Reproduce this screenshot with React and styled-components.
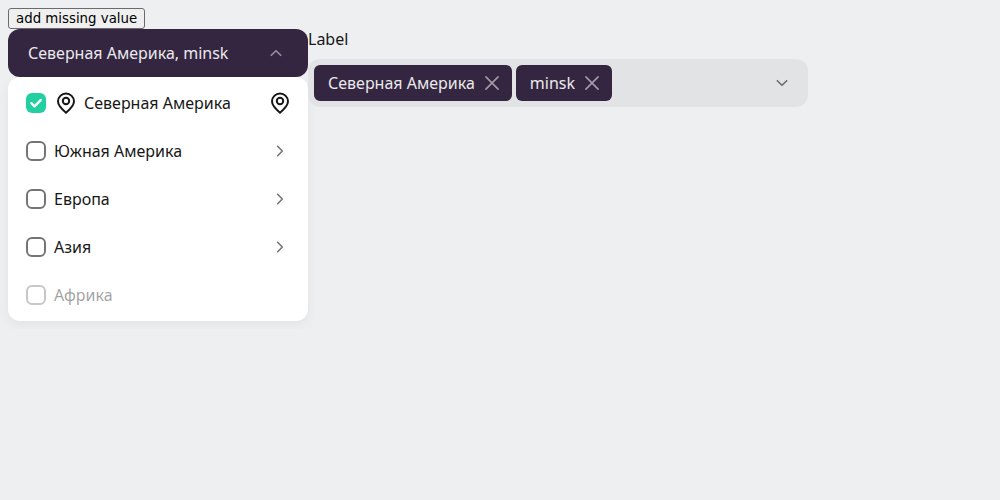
import React, { useState } from "react";
import styled, { createGlobalStyle, css } from "styled-components";

const Global = createGlobalStyle`
  *, *::before, *::after { box-sizing: border-box; }
  body {
    margin: 0;
    padding: 8px;
    background: #eeeff1;
    color: #171717;
    font: 16px/20px "Noto Sans", "Open Sans", sans-serif;
  }
`;

const PlainButton = styled.button`
  display: block;
  height: 21px;
  padding: 0 7px;
  border: 1px solid #6b6b6b;
  border-radius: 3px;
  background: #efefef;
  color: #000;
  font-family: "DejaVu Sans", sans-serif;
  line-height: 19px;
`;

const Columns = styled.main`
  display: flex;
  align-items: flex-start;
`;

const Dropdown = styled.section`
  flex: 0 1 300px;
`;

const Trigger = styled.button`
  display: flex;
  align-items: center;
  justify-content: space-between;
  width: 100%;
  height: 48px;
  padding: 0 20px;
  border: 0;
  border-radius: 12px;
  background: #342640;
  color: #ebe9ec;
  font: inherit;
`;

const Menu = styled.ul`
  margin: 0;
  padding: 2px 0;
  list-style: none;
  border-radius: 12px;
  background: #fff;
  box-shadow: 0 4px 12px rgba(8, 8, 8, 0.05);
`;

const Option = styled.li`
  display: flex;
  align-items: center;
  gap: 8px;
  height: 48px;
  padding: 0 16px 0 18px;
  ${(p) => p.$disabled && css`opacity: 0.4;`}
`;

const OptionLabel = styled.label`
  display: flex;
  flex: 1;
  align-items: center;
  gap: 6px;
`;

const Check = styled.input`
  appearance: none;
  flex: none;
  width: 20px;
  height: 20px;
  margin: 0;
  border: 2px solid #747474;
  border-radius: 6px;
  background: #fff;
  &:checked {
    border: 0;
    background: #21cfa0 url("data:image/svg+xml,%3Csvg xmlns='http://www.w3.org/2000/svg' width='20' height='20' fill='none' stroke='white' stroke-width='2.400' stroke-linecap='round' stroke-linejoin='round'%3E%3Cpath d='M5.400 10.200l3.100 3.100 6.200-6.200'/%3E%3C/svg%3E");
  }
`;

const Icon = styled.svg`
  flex: none;
  display: block;
  fill: none;
  stroke: currentColor;
  stroke-linecap: round;
  stroke-linejoin: round;
  color: ${(p) => p.$color || "#171717"};
`;

const Field = styled.section`
  flex: 0 1 500px;
  min-width: 0;
`;

const FieldLabel = styled.label`
  display: block;
  height: 30px;
`;

const Box = styled.div`
  display: flex;
  align-items: center;
  gap: 4px;
  height: 48px;
  padding: 0 14px 0 6px;
  border-radius: 12px;
  background: #e2e3e5;
`;

const Chip = styled.span`
  display: flex;
  align-items: center;
  gap: 5px;
  height: 36px;
  padding: 0 8px 0 14px;
  border-radius: 6px;
  background: #342640;
  color: #ebe9ec;
  white-space: nowrap;
`;

const IconButton = styled.button`
  flex: none;
  padding: 0;
  border: 0;
  background: none;
`;

const Entry = styled.input`
  flex: 1;
  width: 0;
  min-width: 0;
  padding: 0;
  border: 0;
  outline: 0;
  background: none;
  font: inherit;
`;

const chevrons = {
  up: "M7.3 14.300l4.700-4.600 4.700 4.600",
  down: "M7.3 9.700l4.700 4.600 4.700-4.600",
  right: "M9.700 7.300l4.600 4.700-4.600 4.700",
};

const Chevron = ({ to, color }) => (
  <Icon width="24" height="24" viewBox="0 0 24 24" strokeWidth="1.6" $color={color} aria-hidden="true">
    <path d={chevrons[to]} />
  </Icon>
);

const Pin = () => (
  <Icon width="24" height="24" viewBox="0 0 24 24" strokeWidth="2" aria-hidden="true">
    <path d="M12 21.700C9 19.200 4 14.300 4 10.300a8 7.700 0 0 1 16 0c0 4-5 8.900-8 11.400z" />
    <circle cx="12" cy="10" r="3.200" />
  </Icon>
);

const Cross = () => (
  <Icon width="24" height="24" viewBox="0 0 24 24" strokeWidth="1.6" $color="#a39ba9" aria-hidden="true">
    <path d="M5.900 5.900l12.200 12.200M18.100 5.900l-12.200 12.200" />
  </Icon>
);

const regions = [
  { name: "Северная Америка", pin: true },
  { name: "Южная Америка", nested: true },
  { name: "Европа", nested: true },
  { name: "Азия", nested: true },
  { name: "Африка", disabled: true },
];

export default function App() {
  const [checked, setChecked] = useState(["Северная Америка"]);
  const [chips, setChips] = useState(["Северная Америка", "minsk"]);
  const toggle = (name) =>
    setChecked((now) => (now.includes(name) ? now.filter((n) => n !== name) : [...now, name]));

  return (
    <>
      <Global />
      <PlainButton type="button">add missing value</PlainButton>
      <Columns>
        <Dropdown>
          <Trigger type="button" aria-expanded="true">
            Северная Америка, minsk
            <Chevron to="up" color="#99929f" />
          </Trigger>
          <Menu>
            {regions.map((r, i) => (
              <Option key={r.name} $disabled={r.disabled}>
                <Check
                  type="checkbox"
                  id={`region-${i}`}
                  disabled={r.disabled}
                  checked={checked.includes(r.name)}
                  onChange={() => toggle(r.name)}
                />
                <OptionLabel htmlFor={`region-${i}`}>
                  {r.pin && <Pin />}
                  {r.name}
                </OptionLabel>
                {r.pin && <Pin />}
                {r.nested && <Chevron to="right" color="#747474" />}
              </Option>
            ))}
          </Menu>
        </Dropdown>
        <Field>
          <FieldLabel htmlFor="entry">Label</FieldLabel>
          <Box>
            {chips.map((c) => (
              <Chip key={c}>
                {c}
                <IconButton type="button" aria-label={`Remove ${c}`} onClick={() => setChips(chips.filter((x) => x !== c))}>
                  <Cross />
                </IconButton>
              </Chip>
            ))}
            <Entry id="entry" />
            <IconButton type="button" aria-label="Open list">
              <Chevron to="down" color="#6c6c6d" />
            </IconButton>
          </Box>
        </Field>
      </Columns>
    </>
  );
}
